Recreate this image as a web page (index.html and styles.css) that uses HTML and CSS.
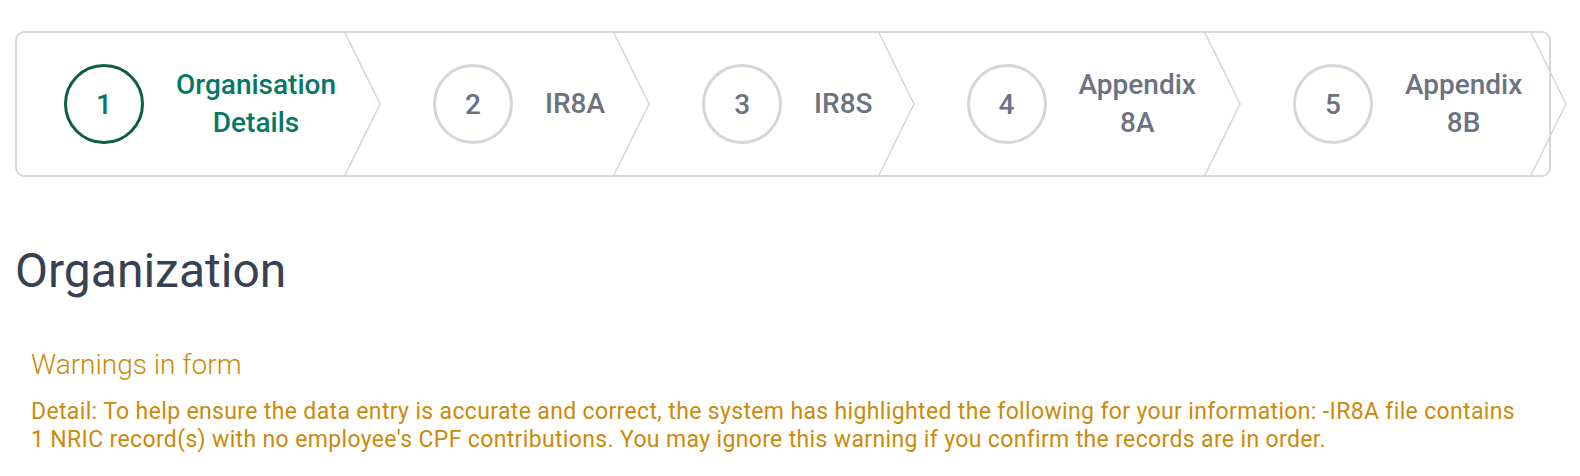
FILE: index.html
```html
<!DOCTYPE html>
<html lang="en">
<head>
<meta charset="utf-8">
<title>Organization</title>
<link rel="stylesheet" href="styles.css">
</head>
<body>
<div class="page">
  <nav class="stepper">
    <div class="step step-first step-active">
      <span class="circle">1</span>
      <span class="label">Organisation<br>Details</span>
      <svg class="chev" viewBox="0 0 36 142" preserveAspectRatio="none"><polyline points="0,0 35,71 0,142"/></svg>
    </div>
    <div class="step">
      <span class="circle">2</span>
      <span class="label">IR8A</span>
      <svg class="chev" viewBox="0 0 36 142" preserveAspectRatio="none"><polyline points="0,0 35,71 0,142"/></svg>
    </div>
    <div class="step step-tight">
      <span class="circle">3</span>
      <span class="label">IR8S</span>
      <svg class="chev" viewBox="0 0 36 142" preserveAspectRatio="none"><polyline points="0,0 35,71 0,142"/></svg>
    </div>
    <div class="step">
      <span class="circle">4</span>
      <span class="label">Appendix<br>8A</span>
      <svg class="chev" viewBox="0 0 36 142" preserveAspectRatio="none"><polyline points="0,0 35,71 0,142"/></svg>
    </div>
    <div class="step">
      <span class="circle">5</span>
      <span class="label">Appendix<br>8B</span>
      <svg class="chev" viewBox="0 0 36 142" preserveAspectRatio="none"><polyline points="0,0 35,71 0,142"/></svg>
    </div>
  </nav>

  <h1 class="title">Organization</h1>

  <section class="warning">
    <h2 class="warning-title">Warnings in form</h2>
    <p class="warning-detail">Detail: To help ensure the data entry is accurate and correct, the system has highlighted the following for your information: -IR8A file contains 1 NRIC record(s) with no employee's CPF contributions. You may ignore this warning if you confirm the records are in order.</p>
  </section>
</div>
</body>
</html>
```

FILE: styles.css
```css
* { box-sizing: border-box; }

html, body {
  margin: 0;
  padding: 0;
  background: #ffffff;
}

body {
  font-family: Roboto, "Liberation Sans", Arial, sans-serif;
}

.page {
  padding: 31px 29px 0 15px;
}

.stepper {
  display: flex;
  align-items: center;
  height: 146px;
  border: 2px solid #d5d8de;
  border-radius: 9px;
  overflow: visible;
}

.step {
  position: relative;
  flex: none;
  display: flex;
  align-items: center;
  height: 100%;
  padding: 0 10px 0 87px;
}

.step-first {
  padding-left: 47px;
}

.step-tight {
  padding-right: 7px;
}

.circle {
  flex: none;
  width: 80px;
  height: 80px;
  border: 3px solid #d3d6dc;
  border-radius: 50%;
  display: flex;
  align-items: center;
  justify-content: center;
  font-size: 28px;
  font-weight: 500;
  color: #6b7280;
}

.label {
  margin-left: 32px;
  font-size: 28px;
  font-weight: 500;
  line-height: 38px;
  text-align: center;
  white-space: nowrap;
  color: #6b7280;
}

.step-active .circle {
  border-color: #0b5d45;
  color: #067866;
}

.step-active .label {
  color: #067866;
}

.chev {
  position: absolute;
  top: 0;
  right: -35px;
  width: 36px;
  height: 100%;
  overflow: visible;
}

.chev polyline {
  fill: none;
  stroke: #d3d6dc;
  stroke-width: 1.6;
  vector-effect: non-scaling-stroke;
}

.title {
  margin: 66px 0 0 0;
  font-size: 48px;
  font-weight: 400;
  line-height: 56px;
  color: #374151;
}

.warning {
  margin-top: 48px;
  padding: 0 16px;
  color: #cc8a0a;
}

.warning-title {
  margin: 0;
  font-size: 28px;
  font-weight: 300;
  line-height: 36px;
}

.warning-detail {
  margin: 15px 0 0 0;
  max-width: 1495px;
  font-size: 23px;
  letter-spacing: 0.35px;
  font-weight: 400;
  line-height: 28px;
}
```
